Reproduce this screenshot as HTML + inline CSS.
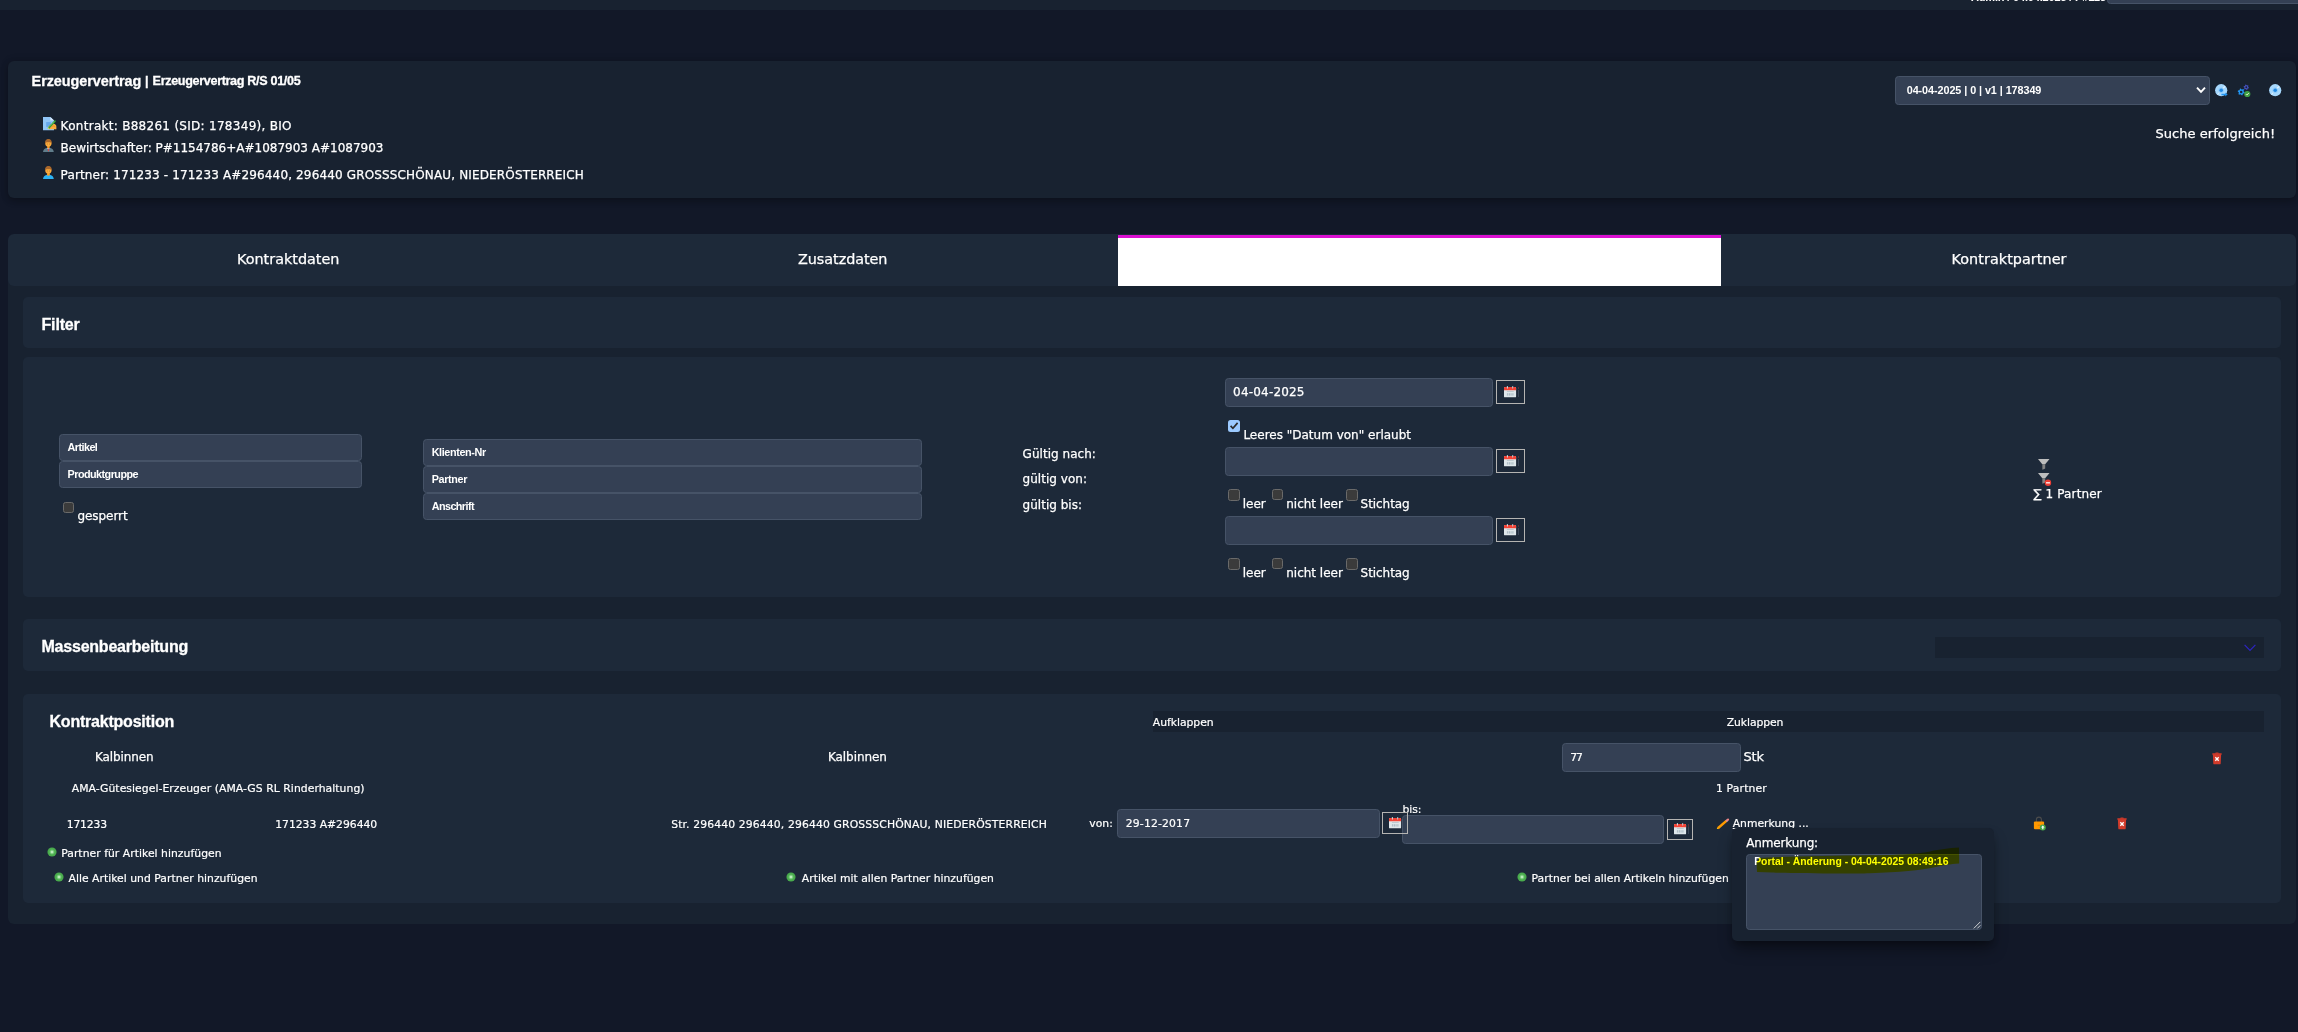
<!DOCTYPE html>
<html lang="de">
<head>
<meta charset="utf-8">
<title>Erzeugervertrag R/S 01/05</title>
<style>
html,body{margin:0;padding:0;background:#121828;}
body{width:2298px;height:1032px;position:relative;overflow:hidden;font-family:"DejaVu Sans", "Liberation Sans", sans-serif;font-size:12px;color:#fff;}
.a{position:absolute;display:block;box-sizing:border-box;}
.t{white-space:pre;line-height:normal;}
.in{background:#344054;border:1px solid #465367;border-radius:3.6px;}
.cb{background:#3b3b3b;border:1px solid #6a6a6a;border-radius:2.5px;}
.cal{border:1.2px solid #b5b4b2;}
svg{position:absolute;overflow:visible;}
</style>
</head>
<body>
<div id="topbar">
<div class="a " style="left:0px;top:0px;width:2298px;height:10px;background:#182230;"></div>
<span class="a t" style="left:1971.00px;top:-9.40px;font-family:'Liberation Sans', sans-serif;font-size:11px;color:#ffffff;font-weight:bold;letter-spacing:-0.170px;">Admin / 04.04.2025 / P#123</span>
<div class="a in" style="left:2107px;top:-20px;width:200px;height:24px;border-radius:3.6px;"></div>
</div>
<header id="contract-header">
<div class="a " style="left:8px;top:61px;width:2288px;height:136.8px;background:#182230;border-radius:6px;box-shadow:0 3px 7px rgba(0,0,0,.24),0 0 9px rgba(0,0,0,.14);"></div>
<span class="a t" style="left:31.60px;top:73.00px;font-family:'Liberation Sans', sans-serif;font-size:14.4px;color:#ffffff;font-weight:bold;letter-spacing:-0.046px;-webkit-text-stroke:0.3px #ffffff;">Erzeugervertrag</span>
<span class="a t" style="left:144.90px;top:74.20px;font-family:'Liberation Sans', sans-serif;font-size:12.6px;color:#ffffff;font-weight:bold;-webkit-text-stroke:0.3px #ffffff;">|</span>
<span class="a t" style="left:152.60px;top:74.20px;font-family:'Liberation Sans', sans-serif;font-size:12.6px;color:#ffffff;font-weight:bold;letter-spacing:-0.336px;-webkit-text-stroke:0.3px #ffffff;">Erzeugervertrag R/S 01/05</span>
<span class="a t" style="left:60.60px;top:118.60px;font-family:'DejaVu Sans', 'Liberation Sans', sans-serif;font-size:12px;color:#ffffff;letter-spacing:0.285px;-webkit-text-stroke:0.25px #ffffff;">Kontrakt: B88261 (SID: 178349), BIO</span>
<span class="a t" style="left:60.60px;top:140.60px;font-family:'DejaVu Sans', 'Liberation Sans', sans-serif;font-size:12px;color:#ffffff;-webkit-text-stroke:0.25px #ffffff;">Bewirtschafter: P#1154786+A#1087903 A#1087903</span>
<span class="a t" style="left:60.60px;top:167.70px;font-family:'DejaVu Sans', 'Liberation Sans', sans-serif;font-size:12px;color:#ffffff;letter-spacing:0.147px;-webkit-text-stroke:0.25px #ffffff;">Partner: 171233 - 171233 A#296440, 296440 GROSSSCHÖNAU, NIEDERÖSTERREICH</span>
<svg class="a" style="left:42.9px;top:116.9px" width="13.4" height="13.2" viewBox="0 0 13.4 13.2">
<path d="M0 0 H7.4 L11 3.6 V13.2 H0 Z" fill="#90c6f7"/><path d="M7.4 0 L11 3.6 H7.4 Z" fill="#d9ebfc"/>
<rect x="3.2" y="5.1" width="4.6" height="4.8" fill="#64a7ea"/>
<path d="M5 10.8 C5.8 8.6 8 6.8 10.4 6.8 C12.4 6.8 13.4 8.2 13.4 9.8 V12.2 H5.8 Z" fill="#f9ab3d"/>
<path d="M12 4.2 L5.6 11.2" stroke="#2f9a3c" stroke-width="1.7" stroke-linecap="round"/><path d="M11.2 4.6 L6.4 9.8" stroke="#7fcf5a" stroke-width=".6"/><path d="M5.9 10.7 L4.9 12" stroke="#d8e070" stroke-width="1.1"/>
<path d="M8.4 9.8 C9.4 9 10.8 8.8 12 9.6" stroke="#e38f22" stroke-width=".7" fill="none"/></svg>
<svg class="a" style="left:43.1px;top:138.9px" width="10.8" height="13" viewBox="0 0 10.8 13">
<path d="M0 13 C0.3 10.4 2 9.2 4.2 8.8 H6.6 C8.8 9.2 10.5 10.4 10.8 13 Z" fill="#607d8b"/>
<rect x="4.2" y="6.8" width="2.4" height="2.5" fill="#f59a23"/><path d="M4.3 9 L5.4 10.8 L6.5 9 Z" fill="#fff"/><path d="M5.05 9.3 H5.75 L5.95 11.7 L5.4 12.4 L4.85 11.7 Z" fill="#e0433e"/>
<ellipse cx="5.4" cy="4.6" rx="3.15" ry="3.1" fill="#fbab3c"/>
<path d="M2.2 4.9 C1.5 1.7 3.3 0 5.4 0 C7.6 0 9.3 1.7 8.6 4.9 C8.3 3.6 7.6 3.2 5.4 3.2 C3.2 3.2 2.5 3.6 2.2 4.9 Z" fill="#a8672c"/>
<circle cx="4.2" cy="5" r=".42" fill="#8a5a20"/><circle cx="6.6" cy="5" r=".42" fill="#8a5a20"/></svg>
<svg class="a" style="left:43.1px;top:165.9px" width="10.8" height="13" viewBox="0 0 10.8 13">
<path d="M0 13 C0.3 10.4 2 9.2 4.2 8.8 H6.6 C8.8 9.2 10.5 10.4 10.8 13 Z" fill="#2db4f4"/>
<rect x="4.2" y="6.8" width="2.4" height="2.5" fill="#f59a23"/><path d="M3.9 8.8 Q5.4 10.6 6.9 8.8 L6.5 7.8 H4.3 Z" fill="#f59a23"/>
<ellipse cx="5.4" cy="4.6" rx="3.15" ry="3.1" fill="#fbab3c"/>
<path d="M2.2 4.9 C1.5 1.7 3.3 0 5.4 0 C7.6 0 9.3 1.7 8.6 4.9 C8.3 3.6 7.6 3.2 5.4 3.2 C3.2 3.2 2.5 3.6 2.2 4.9 Z" fill="#a8672c"/>
<circle cx="4.2" cy="5" r=".42" fill="#8a5a20"/><circle cx="6.6" cy="5" r=".42" fill="#8a5a20"/></svg>
<svg class="a" style="left:2214.8px;top:83.8px" width="13" height="13" viewBox="0 0 13 13">
<circle cx="6.2" cy="6.2" r="6.1" fill="#a6d8fd"/>
<path d="M9.6 1.9 L10.5 2.8 L8 5.3 L7.1 4.4 Z M5.3 7.1 L4.4 8 L2.2 10.3 L3 11.1 Z" fill="#e3f3fe"/>
<circle cx="6.2" cy="6.2" r="2.7" fill="#8fcbfa"/><circle cx="6.2" cy="6.2" r="1.75" fill="#1e88e5"/><path d="M6.4 9.7 H10.4 L10 8.5 L12.7 10.5 L10 12.5 L10.4 11.3 H6.4 Z" fill="#2196f3"/></svg>
<svg class="a" style="left:2268.8px;top:83.8px" width="13" height="13" viewBox="0 0 13 13">
<circle cx="6.2" cy="6.2" r="6.1" fill="#a6d8fd"/>
<path d="M9.6 1.9 L10.5 2.8 L8 5.3 L7.1 4.4 Z M5.3 7.1 L4.4 8 L2.2 10.3 L3 11.1 Z" fill="#e3f3fe"/>
<circle cx="6.2" cy="6.2" r="2.7" fill="#8fcbfa"/><circle cx="6.2" cy="6.2" r="1.75" fill="#1e88e5"/></svg>
<svg class="a" style="left:2236px;top:83px" width="16" height="16" viewBox="0 0 16 16">
<polygon points="12.98,4.65 12.79,5.33 11.84,5.48 11.48,5.84 11.33,6.79 10.65,6.98 10.05,6.23 9.56,6.10 8.66,6.44 8.16,5.94 8.50,5.04 8.37,4.55 7.62,3.95 7.81,3.27 8.76,3.12 9.12,2.76 9.27,1.81 9.95,1.62 10.55,2.37 11.04,2.50 11.94,2.16 12.44,2.66 12.10,3.56 12.23,4.05" fill="#4653c4"/><circle cx="10.3" cy="4.3" r="0.97" fill="#1a2332"/><polygon points="8.67,9.36 8.43,10.24 7.20,10.43 6.73,10.90 6.54,12.13 5.66,12.37 4.87,11.40 4.24,11.23 3.07,11.68 2.42,11.03 2.87,9.86 2.70,9.23 1.73,8.44 1.97,7.56 3.20,7.37 3.67,6.90 3.86,5.67 4.74,5.43 5.53,6.40 6.16,6.57 7.33,6.12 7.98,6.77 7.53,7.94 7.70,8.57" fill="#2196f3"/><circle cx="5.2" cy="8.9" r="1.26" fill="#1a2332"/>
<circle cx="11.3" cy="11" r="3.1" fill="#3fa043"/><path d="M9.9 11.1 L10.9 12.1 L12.8 10" fill="none" stroke="#eef7d8" stroke-width=".9"/></svg>
<div class="a in" style="left:1895px;top:76px;width:315px;height:29px;border-radius:3.6px;"></div>
<span class="a t" style="left:1906.70px;top:84.00px;font-family:'Liberation Sans', sans-serif;font-size:10.8px;color:#ffffff;font-weight:bold;letter-spacing:-0.062px;">04-04-2025 | 0 | v1 | 178349</span>
<svg class="a" style="left:2196px;top:86px" width="10" height="8" viewBox="0 0 10 8"><path d="M1 1.6 L5 5.8 L9 1.6" fill="none" stroke="#fff" stroke-width="1.9"/></svg>
<span class="a t" style="left:2155.50px;top:126.20px;font-family:'DejaVu Sans', 'Liberation Sans', sans-serif;font-size:13px;color:#ffffff;letter-spacing:0.038px;-webkit-text-stroke:0.25px #ffffff;">Suche erfolgreich!</span>
</header>
<nav id="tabs">
<div class="a " style="left:8px;top:280px;width:2288px;height:10px;background:#182230;"></div>
<div class="a " style="left:8px;top:234px;width:2288px;height:52px;background:#1d2939;border-radius:6px;"></div>
<div class="a " style="left:1118px;top:235px;width:603px;height:51px;background:#ffffff;border-top:3px solid #db10d2;"></div>
<span class="a t" style="left:237.00px;top:251.40px;font-family:'DejaVu Sans', 'Liberation Sans', sans-serif;font-size:14.4px;color:#ffffff;letter-spacing:-0.014px;-webkit-text-stroke:0.25px #ffffff;">Kontraktdaten</span>
<span class="a t" style="left:798.00px;top:251.40px;font-family:'DejaVu Sans', 'Liberation Sans', sans-serif;font-size:14.4px;color:#ffffff;letter-spacing:-0.060px;-webkit-text-stroke:0.25px #ffffff;">Zusatzdaten</span>
<span class="a t" style="left:1345.00px;top:251.40px;font-family:'DejaVu Sans', 'Liberation Sans', sans-serif;font-size:14.4px;color:#ffffff;-webkit-text-stroke:0.25px #ffffff;">Kontraktpositionen</span>
<span class="a t" style="left:1951.50px;top:251.40px;font-family:'DejaVu Sans', 'Liberation Sans', sans-serif;font-size:14.4px;color:#ffffff;letter-spacing:0.040px;-webkit-text-stroke:0.25px #ffffff;">Kontraktpartner</span>
</nav>
<main id="content">
<div class="a " style="left:8px;top:286px;width:2288px;height:638px;background:#182230;border-radius:0 0 6px 6px;"></div>
<section id="filter">
<div class="a " style="left:23px;top:297px;width:2258px;height:51px;background:#1d2939;border-radius:5px;"></div>
<span class="a t" style="left:41.50px;top:316.00px;font-family:'Liberation Sans', sans-serif;font-size:16px;color:#ffffff;font-weight:bold;letter-spacing:-0.171px;-webkit-text-stroke:0.3px #ffffff;">Filter</span>
<div class="a " style="left:23px;top:357px;width:2258px;height:240px;background:#1d2939;border-radius:5px;"></div>
<div class="a in" style="left:59px;top:434px;width:303px;height:26.5px;border-radius:3.6px;"></div>
<span class="a t" style="left:67.60px;top:441.30px;font-family:'Liberation Sans', sans-serif;font-size:10.8px;color:#ffffff;font-weight:bold;letter-spacing:-0.558px;">Artikel</span>
<div class="a in" style="left:59px;top:461px;width:303px;height:26.5px;border-radius:3.6px;"></div>
<span class="a t" style="left:67.60px;top:468.30px;font-family:'Liberation Sans', sans-serif;font-size:10.8px;color:#ffffff;font-weight:bold;letter-spacing:-0.538px;">Produktgruppe</span>
<div class="a cb" style="left:63px;top:502px;width:11px;height:11px;"></div>
<span class="a t" style="left:77.40px;top:508.80px;font-family:'DejaVu Sans', 'Liberation Sans', sans-serif;font-size:12px;color:#ffffff;letter-spacing:-0.053px;-webkit-text-stroke:0.25px #ffffff;">gesperrt</span>
<div class="a in" style="left:423px;top:439px;width:499px;height:26.5px;border-radius:3.6px;"></div>
<span class="a t" style="left:431.70px;top:446.10px;font-family:'Liberation Sans', sans-serif;font-size:10.8px;color:#ffffff;font-weight:bold;letter-spacing:-0.372px;">Klienten-Nr</span>
<div class="a in" style="left:423px;top:466px;width:499px;height:26.5px;border-radius:3.6px;"></div>
<span class="a t" style="left:431.70px;top:473.10px;font-family:'Liberation Sans', sans-serif;font-size:10.8px;color:#ffffff;font-weight:bold;letter-spacing:-0.359px;">Partner</span>
<div class="a in" style="left:423px;top:493px;width:499px;height:26.5px;border-radius:3.6px;"></div>
<span class="a t" style="left:431.70px;top:500.10px;font-family:'Liberation Sans', sans-serif;font-size:10.8px;color:#ffffff;font-weight:bold;letter-spacing:-0.566px;">Anschrift</span>
<span class="a t" style="left:1022.60px;top:446.90px;font-family:'DejaVu Sans', 'Liberation Sans', sans-serif;font-size:12px;color:#ffffff;letter-spacing:0.032px;-webkit-text-stroke:0.25px #ffffff;">Gültig nach:</span>
<span class="a t" style="left:1022.60px;top:471.90px;font-family:'DejaVu Sans', 'Liberation Sans', sans-serif;font-size:12px;color:#ffffff;letter-spacing:0.025px;-webkit-text-stroke:0.25px #ffffff;">gültig von:</span>
<span class="a t" style="left:1022.60px;top:497.70px;font-family:'DejaVu Sans', 'Liberation Sans', sans-serif;font-size:12px;color:#ffffff;letter-spacing:0.011px;-webkit-text-stroke:0.25px #ffffff;">gültig bis:</span>
<div class="a in" style="left:1225px;top:378px;width:268px;height:29px;border-radius:3.6px;"></div>
<div class="a cal" style="left:1496px;top:379.8px;width:29px;height:24.3px;"></div>
<svg class="a" style="left:1504.1px;top:385.7px" width="12.2" height="11.4" viewBox="0 0 12.2 11.4">
<rect x="0" y="1.1" width="12.1" height="10.2" rx=".9" fill="#dfe7eb"/>
<path d="M.9 1.1h10.3a.9.9 0 0 1 .9.9V4.3H0V2a.9.9 0 0 1 .9-.9z" fill="#f44336"/>
<rect x="2.9" y="0" width="1.1" height="2.5" rx=".55" fill="#cfd8dc"/><rect x="8.1" y="0" width="1.1" height="2.5" rx=".55" fill="#b8c4ca"/>
<g fill="#aebdc6"><rect x="2.9" y="5.3" width="6.8" height=".7"/><rect x="2.9" y="7.2" width="1.5" height="2.4"/><rect x="5" y="7.2" width="1.5" height="2.4"/><rect x="7.1" y="7.2" width="2.6" height="2.4" fill="#bccad1"/></g>
</svg>
<div class="a " style="left:1518.0px;top:386.9px;width:0.9px;height:2.6px;background:#57303a;"></div>
<div class="a " style="left:1518.0px;top:389.5px;width:0.9px;height:7.2px;background:#3a4658;"></div>
<div class="a in" style="left:1225px;top:447px;width:268px;height:29px;border-radius:3.6px;"></div>
<div class="a cal" style="left:1496px;top:448.8px;width:29px;height:24.3px;"></div>
<svg class="a" style="left:1504.1px;top:454.7px" width="12.2" height="11.4" viewBox="0 0 12.2 11.4">
<rect x="0" y="1.1" width="12.1" height="10.2" rx=".9" fill="#dfe7eb"/>
<path d="M.9 1.1h10.3a.9.9 0 0 1 .9.9V4.3H0V2a.9.9 0 0 1 .9-.9z" fill="#f44336"/>
<rect x="2.9" y="0" width="1.1" height="2.5" rx=".55" fill="#cfd8dc"/><rect x="8.1" y="0" width="1.1" height="2.5" rx=".55" fill="#b8c4ca"/>
<g fill="#aebdc6"><rect x="2.9" y="5.3" width="6.8" height=".7"/><rect x="2.9" y="7.2" width="1.5" height="2.4"/><rect x="5" y="7.2" width="1.5" height="2.4"/><rect x="7.1" y="7.2" width="2.6" height="2.4" fill="#bccad1"/></g>
</svg>
<div class="a " style="left:1518.0px;top:455.9px;width:0.9px;height:2.6px;background:#57303a;"></div>
<div class="a " style="left:1518.0px;top:458.5px;width:0.9px;height:7.2px;background:#3a4658;"></div>
<div class="a in" style="left:1225px;top:516px;width:268px;height:29px;border-radius:3.6px;"></div>
<div class="a cal" style="left:1496px;top:517.8px;width:29px;height:24.3px;"></div>
<svg class="a" style="left:1504.1px;top:523.6999999999999px" width="12.2" height="11.4" viewBox="0 0 12.2 11.4">
<rect x="0" y="1.1" width="12.1" height="10.2" rx=".9" fill="#dfe7eb"/>
<path d="M.9 1.1h10.3a.9.9 0 0 1 .9.9V4.3H0V2a.9.9 0 0 1 .9-.9z" fill="#f44336"/>
<rect x="2.9" y="0" width="1.1" height="2.5" rx=".55" fill="#cfd8dc"/><rect x="8.1" y="0" width="1.1" height="2.5" rx=".55" fill="#b8c4ca"/>
<g fill="#aebdc6"><rect x="2.9" y="5.3" width="6.8" height=".7"/><rect x="2.9" y="7.2" width="1.5" height="2.4"/><rect x="5" y="7.2" width="1.5" height="2.4"/><rect x="7.1" y="7.2" width="2.6" height="2.4" fill="#bccad1"/></g>
</svg>
<div class="a " style="left:1518.0px;top:524.9px;width:0.9px;height:2.6px;background:#57303a;"></div>
<div class="a " style="left:1518.0px;top:527.5px;width:0.9px;height:7.2px;background:#3a4658;"></div>
<span class="a t" style="left:1233.10px;top:385.10px;font-family:'DejaVu Sans', 'Liberation Sans', sans-serif;font-size:12px;color:#ffffff;letter-spacing:0.185px;-webkit-text-stroke:0.25px #ffffff;">04-04-2025</span>
<div class="a " style="left:1228px;top:420px;width:12px;height:11.5px;background:#9ccaff;border-radius:2.5px;"></div>
<svg class="a" style="left:1228px;top:420px" width="12" height="11.5" viewBox="0 0 12 11.5"><path d="M2.6 5.9 L4.9 8.3 L9.6 2.9" fill="none" stroke="#2b2b2b" stroke-width="1.7"/></svg>
<span class="a t" style="left:1243.40px;top:427.70px;font-family:'DejaVu Sans', 'Liberation Sans', sans-serif;font-size:12px;color:#ffffff;-webkit-text-stroke:0.25px #ffffff;">Leeres "Datum von" erlaubt</span>
<div class="a cb" style="left:1228px;top:488.6px;width:12px;height:12px;"></div>
<span class="a t" style="left:1242.80px;top:496.80px;font-family:'DejaVu Sans', 'Liberation Sans', sans-serif;font-size:12px;color:#ffffff;letter-spacing:-0.062px;-webkit-text-stroke:0.25px #ffffff;">leer</span>
<div class="a cb" style="left:1272px;top:489.20000000000005px;width:11px;height:11px;"></div>
<span class="a t" style="left:1286.20px;top:496.80px;font-family:'DejaVu Sans', 'Liberation Sans', sans-serif;font-size:12px;color:#ffffff;-webkit-text-stroke:0.25px #ffffff;">nicht leer</span>
<div class="a cb" style="left:1346px;top:488.6px;width:12px;height:12px;"></div>
<span class="a t" style="left:1360.60px;top:496.80px;font-family:'DejaVu Sans', 'Liberation Sans', sans-serif;font-size:12px;color:#ffffff;letter-spacing:-0.056px;-webkit-text-stroke:0.25px #ffffff;">Stichtag</span>
<div class="a cb" style="left:1228px;top:557.6px;width:12px;height:12px;"></div>
<span class="a t" style="left:1242.80px;top:565.90px;font-family:'DejaVu Sans', 'Liberation Sans', sans-serif;font-size:12px;color:#ffffff;letter-spacing:-0.062px;-webkit-text-stroke:0.25px #ffffff;">leer</span>
<div class="a cb" style="left:1272px;top:558.2px;width:11px;height:11px;"></div>
<span class="a t" style="left:1286.20px;top:565.90px;font-family:'DejaVu Sans', 'Liberation Sans', sans-serif;font-size:12px;color:#ffffff;-webkit-text-stroke:0.25px #ffffff;">nicht leer</span>
<div class="a cb" style="left:1346px;top:557.6px;width:12px;height:12px;"></div>
<span class="a t" style="left:1360.60px;top:565.90px;font-family:'DejaVu Sans', 'Liberation Sans', sans-serif;font-size:12px;color:#ffffff;letter-spacing:-0.056px;-webkit-text-stroke:0.25px #ffffff;">Stichtag</span>
<svg class="a" style="left:2037.8px;top:458.9px" width="14" height="14" viewBox="0 0 14 14">
<path d="M0 0 H11.5 L7.2 5.2 H4.3 Z" fill="#bdbdbd"/><path d="M4.3 5.2 H7.2 V9.6 L4.3 10.8 Z" fill="#7d7d7d"/><path d="M5.6 5.2 H6.2 V10 L5.6 10.25 Z" fill="#8e8e8e"/></svg>
<svg class="a" style="left:2037.8px;top:473.1px" width="14" height="14" viewBox="0 0 14 14">
<path d="M0 0 H11.5 L7.2 5.2 H4.3 Z" fill="#bdbdbd"/><path d="M4.3 5.2 H7.2 V9.6 L4.3 10.8 Z" fill="#7d7d7d"/><path d="M5.6 5.2 H6.2 V10 L5.6 10.25 Z" fill="#8e8e8e"/><circle cx="10" cy="9.8" r="3.2" fill="#ec3e36"/><rect x="8.05" y="9.2" width="3.9" height="1.25" fill="#fff"/></svg>
<span class="a t" style="left:2033.40px;top:486.60px;font-family:'DejaVu Sans', 'Liberation Sans', sans-serif;font-size:12px;color:#ffffff;letter-spacing:0.130px;-webkit-text-stroke:0.25px #ffffff;">∑ 1 Partner</span>
</section>
<section id="massenbearbeitung">
<div class="a " style="left:23px;top:619px;width:2258px;height:51.5px;background:#1d2939;border-radius:5px;"></div>
<span class="a t" style="left:41.50px;top:637.50px;font-family:'Liberation Sans', sans-serif;font-size:16px;color:#ffffff;font-weight:bold;letter-spacing:-0.222px;-webkit-text-stroke:0.3px #ffffff;">Massenbearbeitung</span>
<div class="a " style="left:1935px;top:637px;width:329px;height:21px;background:#182230;"></div>
<svg class="a" style="left:2244px;top:644px" width="12" height="8" viewBox="0 0 12 8"><path d="M0.6 0.8 L6 6.4 L11.4 0.8" fill="none" stroke="#2d25c0" stroke-width="1.2"/></svg>
</section>
<section id="kontraktposition">
<div class="a " style="left:23px;top:694px;width:2258px;height:209px;background:#1d2939;border-radius:5px;"></div>
<span class="a t" style="left:49.50px;top:713.00px;font-family:'Liberation Sans', sans-serif;font-size:16px;color:#ffffff;font-weight:bold;letter-spacing:-0.219px;-webkit-text-stroke:0.3px #ffffff;">Kontraktposition</span>
<div class="a " style="left:1152.5px;top:711px;width:1111.5px;height:21px;background:#182230;"></div>
<span class="a t" style="left:1152.80px;top:715.60px;font-family:'DejaVu Sans', 'Liberation Sans', sans-serif;font-size:10.8px;color:#ffffff;letter-spacing:-0.029px;-webkit-text-stroke:0.2px #ffffff;">Aufklappen</span>
<span class="a t" style="left:1726.80px;top:715.60px;font-family:'DejaVu Sans', 'Liberation Sans', sans-serif;font-size:10.8px;color:#ffffff;letter-spacing:-0.090px;-webkit-text-stroke:0.2px #ffffff;">Zuklappen</span>
<span class="a t" style="left:95.00px;top:749.50px;font-family:'DejaVu Sans', 'Liberation Sans', sans-serif;font-size:12px;color:#ffffff;letter-spacing:-0.111px;-webkit-text-stroke:0.25px #ffffff;">Kalbinnen</span>
<span class="a t" style="left:828.00px;top:749.50px;font-family:'DejaVu Sans', 'Liberation Sans', sans-serif;font-size:12px;color:#ffffff;letter-spacing:-0.078px;-webkit-text-stroke:0.25px #ffffff;">Kalbinnen</span>
<div class="a in" style="left:1562px;top:743px;width:179px;height:28.5px;border-radius:3.6px;"></div>
<span class="a t" style="left:1570.30px;top:750.60px;font-family:'DejaVu Sans', 'Liberation Sans', sans-serif;font-size:10.8px;color:#ffffff;letter-spacing:-1.225px;-webkit-text-stroke:0.2px #ffffff;">77</span>
<span class="a t" style="left:1743.60px;top:748.60px;font-family:'DejaVu Sans', 'Liberation Sans', sans-serif;font-size:13px;color:#ffffff;letter-spacing:-0.264px;-webkit-text-stroke:0.25px #ffffff;">Stk</span>
<span class="a t" style="left:71.70px;top:781.60px;font-family:'DejaVu Sans', 'Liberation Sans', sans-serif;font-size:10.8px;color:#ffffff;letter-spacing:0.056px;-webkit-text-stroke:0.2px #ffffff;">AMA-Gütesiegel-Erzeuger (AMA-GS RL Rinderhaltung)</span>
<span class="a t" style="left:1716.00px;top:781.90px;font-family:'DejaVu Sans', 'Liberation Sans', sans-serif;font-size:10.8px;color:#ffffff;letter-spacing:0.150px;-webkit-text-stroke:0.2px #ffffff;">1 Partner</span>
<span class="a t" style="left:66.70px;top:817.50px;font-family:'DejaVu Sans', 'Liberation Sans', sans-serif;font-size:10.8px;color:#ffffff;letter-spacing:-0.153px;-webkit-text-stroke:0.2px #ffffff;">171233</span>
<span class="a t" style="left:275.20px;top:817.50px;font-family:'DejaVu Sans', 'Liberation Sans', sans-serif;font-size:10.8px;color:#ffffff;letter-spacing:-0.020px;-webkit-text-stroke:0.2px #ffffff;">171233 A#296440</span>
<span class="a t" style="left:671.20px;top:817.50px;font-family:'DejaVu Sans', 'Liberation Sans', sans-serif;font-size:10.8px;color:#ffffff;letter-spacing:0.132px;-webkit-text-stroke:0.2px #ffffff;">Str. 296440 296440, 296440 GROSSSCHÖNAU, NIEDERÖSTERREICH</span>
<span class="a t" style="left:1089.20px;top:817.20px;font-family:'DejaVu Sans', 'Liberation Sans', sans-serif;font-size:10.8px;color:#ffffff;letter-spacing:0.079px;-webkit-text-stroke:0.2px #ffffff;">von:</span>
<div class="a in" style="left:1117px;top:809px;width:263px;height:28.8px;border-radius:3.6px;"></div>
<span class="a t" style="left:1125.80px;top:817.20px;font-family:'DejaVu Sans', 'Liberation Sans', sans-serif;font-size:10.8px;color:#ffffff;letter-spacing:0.165px;-webkit-text-stroke:0.2px #ffffff;">29-12-2017</span>
<span class="a t" style="left:1402.40px;top:802.80px;font-family:'DejaVu Sans', 'Liberation Sans', sans-serif;font-size:10.8px;color:#ffffff;letter-spacing:-0.006px;-webkit-text-stroke:0.2px #ffffff;">bis:</span>
<div class="a in" style="left:1402px;top:815px;width:262px;height:28.8px;border-radius:3.6px;"></div>
<div class="a cal" style="left:1382px;top:812px;width:26px;height:22px;"></div>
<svg class="a" style="left:1389px;top:816.6px" width="12.2" height="11.4" viewBox="0 0 12.2 11.4">
<rect x="0" y="1.1" width="12.1" height="10.2" rx=".9" fill="#dfe7eb"/>
<path d="M.9 1.1h10.3a.9.9 0 0 1 .9.9V4.3H0V2a.9.9 0 0 1 .9-.9z" fill="#f44336"/>
<rect x="2.9" y="0" width="1.1" height="2.5" rx=".55" fill="#cfd8dc"/><rect x="8.1" y="0" width="1.1" height="2.5" rx=".55" fill="#b8c4ca"/>
<g fill="#aebdc6"><rect x="2.9" y="5.3" width="6.8" height=".7"/><rect x="2.9" y="7.2" width="1.5" height="2.4"/><rect x="5" y="7.2" width="1.5" height="2.4"/><rect x="7.1" y="7.2" width="2.6" height="2.4" fill="#bccad1"/></g>
</svg>
<div class="a cal" style="left:1667px;top:819px;width:26px;height:21px;"></div>
<svg class="a" style="left:1674.3px;top:823px" width="12.2" height="11.4" viewBox="0 0 12.2 11.4">
<rect x="0" y="1.1" width="12.1" height="10.2" rx=".9" fill="#dfe7eb"/>
<path d="M.9 1.1h10.3a.9.9 0 0 1 .9.9V4.3H0V2a.9.9 0 0 1 .9-.9z" fill="#f44336"/>
<rect x="2.9" y="0" width="1.1" height="2.5" rx=".55" fill="#cfd8dc"/><rect x="8.1" y="0" width="1.1" height="2.5" rx=".55" fill="#b8c4ca"/>
<g fill="#aebdc6"><rect x="2.9" y="5.3" width="6.8" height=".7"/><rect x="2.9" y="7.2" width="1.5" height="2.4"/><rect x="5" y="7.2" width="1.5" height="2.4"/><rect x="7.1" y="7.2" width="2.6" height="2.4" fill="#bccad1"/></g>
</svg>
<div class="a " style="left:1688.2px;top:824.2px;width:0.9px;height:2.6px;background:#57303a;"></div>
<div class="a " style="left:1688.2px;top:826.8000000000001px;width:0.9px;height:7.2px;background:#3a4658;"></div>
<svg class="a" style="left:1716px;top:818px" width="13" height="12" viewBox="0 0 13 12"><path d="M1.9 10.2 L10.4 2.9" stroke="#ff9a00" stroke-width="2.45"/><path d="M0.8 11.1 L1.2 9.5 L2.7 11 Z" fill="#ffc107"/><path d="M10.2 3.1 L11 2.4" stroke="#b7c6dc" stroke-width="2.2"/><path d="M10.9 2.5 L12 1.55" stroke="#f08484" stroke-width="2.2" stroke-linecap="round"/></svg>
<span class="a t" style="left:1732.70px;top:817.20px;font-family:'DejaVu Sans', 'Liberation Sans', sans-serif;font-size:10.8px;color:#ffffff;letter-spacing:0.005px;-webkit-text-stroke:0.2px #ffffff;text-decoration:underline;text-underline-offset:0.6px;text-decoration-thickness:0.9px;">Anmerkung ...</span>
<svg width="0" height="0" style="position:absolute"><defs><radialGradient id="gd"><stop offset="0" stop-color="#f2fff0"/><stop offset=".28" stop-color="#8fd892"/><stop offset=".6" stop-color="#4caf50"/><stop offset="1" stop-color="#47a84b"/></radialGradient></defs></svg>
<svg class="a" style="left:46.5px;top:846.5px" width="10" height="10" viewBox="0 0 10 10"><circle cx="5" cy="5" r="4.55" fill="url(#gd)"/></svg>
<span class="a t" style="left:61.20px;top:847.00px;font-family:'DejaVu Sans', 'Liberation Sans', sans-serif;font-size:10.8px;color:#ffffff;letter-spacing:0.034px;-webkit-text-stroke:0.2px #ffffff;">Partner für Artikel hinzufügen</span>
<svg class="a" style="left:53.5px;top:871.5px" width="10" height="10" viewBox="0 0 10 10"><circle cx="5" cy="5" r="4.55" fill="url(#gd)"/></svg>
<span class="a t" style="left:68.50px;top:872.00px;font-family:'DejaVu Sans', 'Liberation Sans', sans-serif;font-size:10.8px;color:#ffffff;letter-spacing:0.023px;-webkit-text-stroke:0.2px #ffffff;">Alle Artikel und Partner hinzufügen</span>
<svg class="a" style="left:786.3px;top:871.5px" width="10" height="10" viewBox="0 0 10 10"><circle cx="5" cy="5" r="4.55" fill="url(#gd)"/></svg>
<span class="a t" style="left:801.80px;top:872.00px;font-family:'DejaVu Sans', 'Liberation Sans', sans-serif;font-size:10.8px;color:#ffffff;letter-spacing:0.017px;-webkit-text-stroke:0.2px #ffffff;">Artikel mit allen Partner hinzufügen</span>
<svg class="a" style="left:1516.5px;top:871.7px" width="10" height="10" viewBox="0 0 10 10"><circle cx="5" cy="5" r="4.55" fill="url(#gd)"/></svg>
<span class="a t" style="left:1531.60px;top:872.20px;font-family:'DejaVu Sans', 'Liberation Sans', sans-serif;font-size:10.8px;color:#ffffff;-webkit-text-stroke:0.2px #ffffff;">Partner bei allen Artikeln hinzufügen</span>
<svg class="a" style="left:2211.8px;top:751.6px" width="10" height="12.4" viewBox="0 0 10 12.4"><path d="M0.5 1.6 H9.5 L9.1 3.2 L8.7 11.4 a1 1 0 0 1 -1 .9 H2.3 a1 1 0 0 1 -1 -.9 L0.9 3.2 Z" fill="#d23b2b"/><rect x="3.3" y="0.4" width="3.4" height="1.6" rx=".6" fill="#c53a2b"/><path d="M0.4 1.4 H9.6 V2.6 H0.4 Z" fill="#c4382a"/><path d="M3.3 5.3 L6.7 8.7 M6.7 5.3 L3.3 8.7" stroke="#fff" stroke-width="1.35"/></svg>
<svg class="a" style="left:2117.4px;top:817.4px" width="10" height="12.4" viewBox="0 0 10 12.4"><path d="M0.5 1.6 H9.5 L9.1 3.2 L8.7 11.4 a1 1 0 0 1 -1 .9 H2.3 a1 1 0 0 1 -1 -.9 L0.9 3.2 Z" fill="#d23b2b"/><rect x="3.3" y="0.4" width="3.4" height="1.6" rx=".6" fill="#c53a2b"/><path d="M0.4 1.4 H9.6 V2.6 H0.4 Z" fill="#c4382a"/><path d="M3.3 5.3 L6.7 8.7 M6.7 5.3 L3.3 8.7" stroke="#fff" stroke-width="1.35"/></svg>
<svg class="a" style="left:2033px;top:816.2px" width="14" height="15" viewBox="0 0 14 15"><path d="M3.4 6 V3.6 a2.5 2.5 0 0 1 5 0 V6" fill="none" stroke="#4c4c4c" stroke-width="1.1"/><rect x="0.9" y="5.5" width="10.2" height="7.8" rx="1.1" fill="#ff9800"/><rect x="4.6" y="8.4" width="2.6" height="1.6" rx=".6" fill="#e68600"/><circle cx="9.8" cy="11.4" r="3" fill="#43a447"/><path d="M9.8 9.6 L11.6 11.6 H10.4 V13.2 H9.2 V11.6 H8 Z" fill="#fff"/></svg>
<div id="anmerkung-popup">
<div class="a " style="left:1732px;top:828px;width:262px;height:112.6px;background:#182230;border-radius:5px;box-shadow:0 10px 15px -2px rgba(0,0,0,.38),0 4px 6px -2px rgba(0,0,0,.25);"></div>
<span class="a t" style="left:1746.30px;top:835.90px;font-family:'DejaVu Sans', 'Liberation Sans', sans-serif;font-size:12px;color:#ffffff;letter-spacing:-0.158px;-webkit-text-stroke:0.25px #ffffff;">Anmerkung:</span>
<div class="a in" style="left:1746px;top:854px;width:236px;height:75.5px;border-radius:3.6px;"></div>
<span class="a t" style="left:1754.20px;top:855.50px;font-family:'Liberation Sans', sans-serif;font-size:10.4px;color:#ffffff;font-weight:bold;letter-spacing:-0.010px;">Portal - Änderung - 04-04-2025 08:49:16</span>
<svg class="a" style="left:1750px;top:846px;mix-blend-mode:multiply" width="215" height="32" viewBox="0 0 215 32"><path d="M6.6 16.5 L9 11.8 C30 10.6 80 9.6 120 9.2 C150 8.8 166 8 180 5.4 C190 3.4 198 2.2 209 1.6 L209.2 17.6 C200 18.2 194 19.4 186 21 C170 24.6 150 26.2 120 27.2 C100 27.8 40 27.4 22 26.6 L7 26 Z" fill="#ffff00"/></svg>
<svg class="a" style="left:1972px;top:919.6px" width="9" height="9" viewBox="0 0 9 9"><path d="M8.3 1.9 L1.8 8.4 M8.3 5.4 L5.3 8.4" stroke="#e4e4e4" stroke-width="0.9"/></svg>
</div>
</section>
</main>
</body>
</html>
